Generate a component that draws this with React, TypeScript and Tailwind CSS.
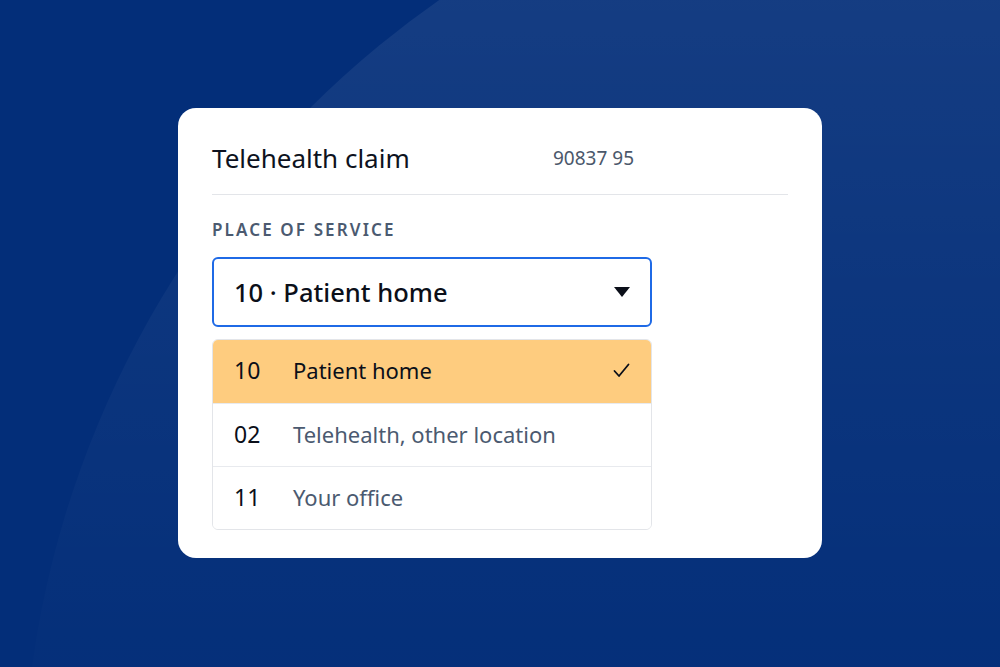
import React from "react";

const rows = [
  { code: "10", label: "Patient home", selected: true },
  { code: "02", label: "Telehealth, other location", selected: false },
  { code: "11", label: "Your office", selected: false },
];

export default function App() {
  return (
    <div
      className="relative w-full h-[667px] overflow-hidden bg-[#032e79] flex items-start justify-center"
      style={{ fontFamily: '"Noto Sans", "Open Sans", sans-serif' }}
    >
      <div className="absolute left-[23px] top-[-176px] w-[1950px] h-[1950px] rounded-full bg-[linear-gradient(to_bottom,rgba(255,255,255,0.072)_9%,rgba(255,255,255,0.04)_24%,rgba(255,255,255,0.012)_40%,rgba(255,255,255,0)_48%)]" />
      <div className="relative mt-[108px] w-[644px] h-[450px] bg-white rounded-[18px] px-[34px] pt-[28px]">
        <div className="flex items-center h-[44px]">
          <div className="text-[26px] font-normal text-[#0d1220] w-[341px] leading-[34px]">Telehealth claim</div>
          <div className="text-[19px] text-[#4b586b] leading-[26px]">90837 95</div>
        </div>
        <div className="mt-[14px] h-px bg-[#e3e5e9]" />
        <div className="mt-[23px] text-[17px] font-semibold tracking-[0.125em] text-[#4b5a70] leading-[24px]">
          PLACE OF SERVICE
        </div>
        <div className="mt-[15px] w-[440px] h-[70px] border-2 border-[#1f6ae6] rounded-[6px] flex items-center justify-between pl-[20px] pr-[20px]">
          <span className="text-[25.5px] text-[#0b0f19] font-medium">10 · Patient home</span>
          <svg width="16" height="10" viewBox="0 0 16 10">
            <path d="M0 0 H16 L8 10 Z" fill="#0b0f19" />
          </svg>
        </div>
        <div className="mt-[12px] w-[440px] border border-[#e3e5e9] rounded-[6px] overflow-hidden">
          {rows.map((r, i) => (
            <div
              key={r.code}
              className={`h-[63px] flex items-center pl-[21px] pr-[21px] pb-[2px] ${r.selected ? "bg-[#fecc7f]" : "bg-white"} ${i > 0 ? "border-t border-[#e8eaee]" : ""}`}
            >
              <span className="w-[59px] text-[23px] text-[#0b0f19]">{r.code}</span>
              <span className={`flex-1 text-[22px] ${r.selected ? "text-[#0b0f19]" : "text-[#4b5a70]"}`}>{r.label}</span>
              {r.selected && (
                <svg width="17" height="15" viewBox="0 0 17 15" fill="none">
                  <path d="M1.5 8 L6 13 L15.5 1.5" stroke="#0b0f19" strokeWidth="1.8" strokeLinecap="round" strokeLinejoin="round" />
                </svg>
              )}
            </div>
          ))}
        </div>
      </div>
    </div>
  );
}
